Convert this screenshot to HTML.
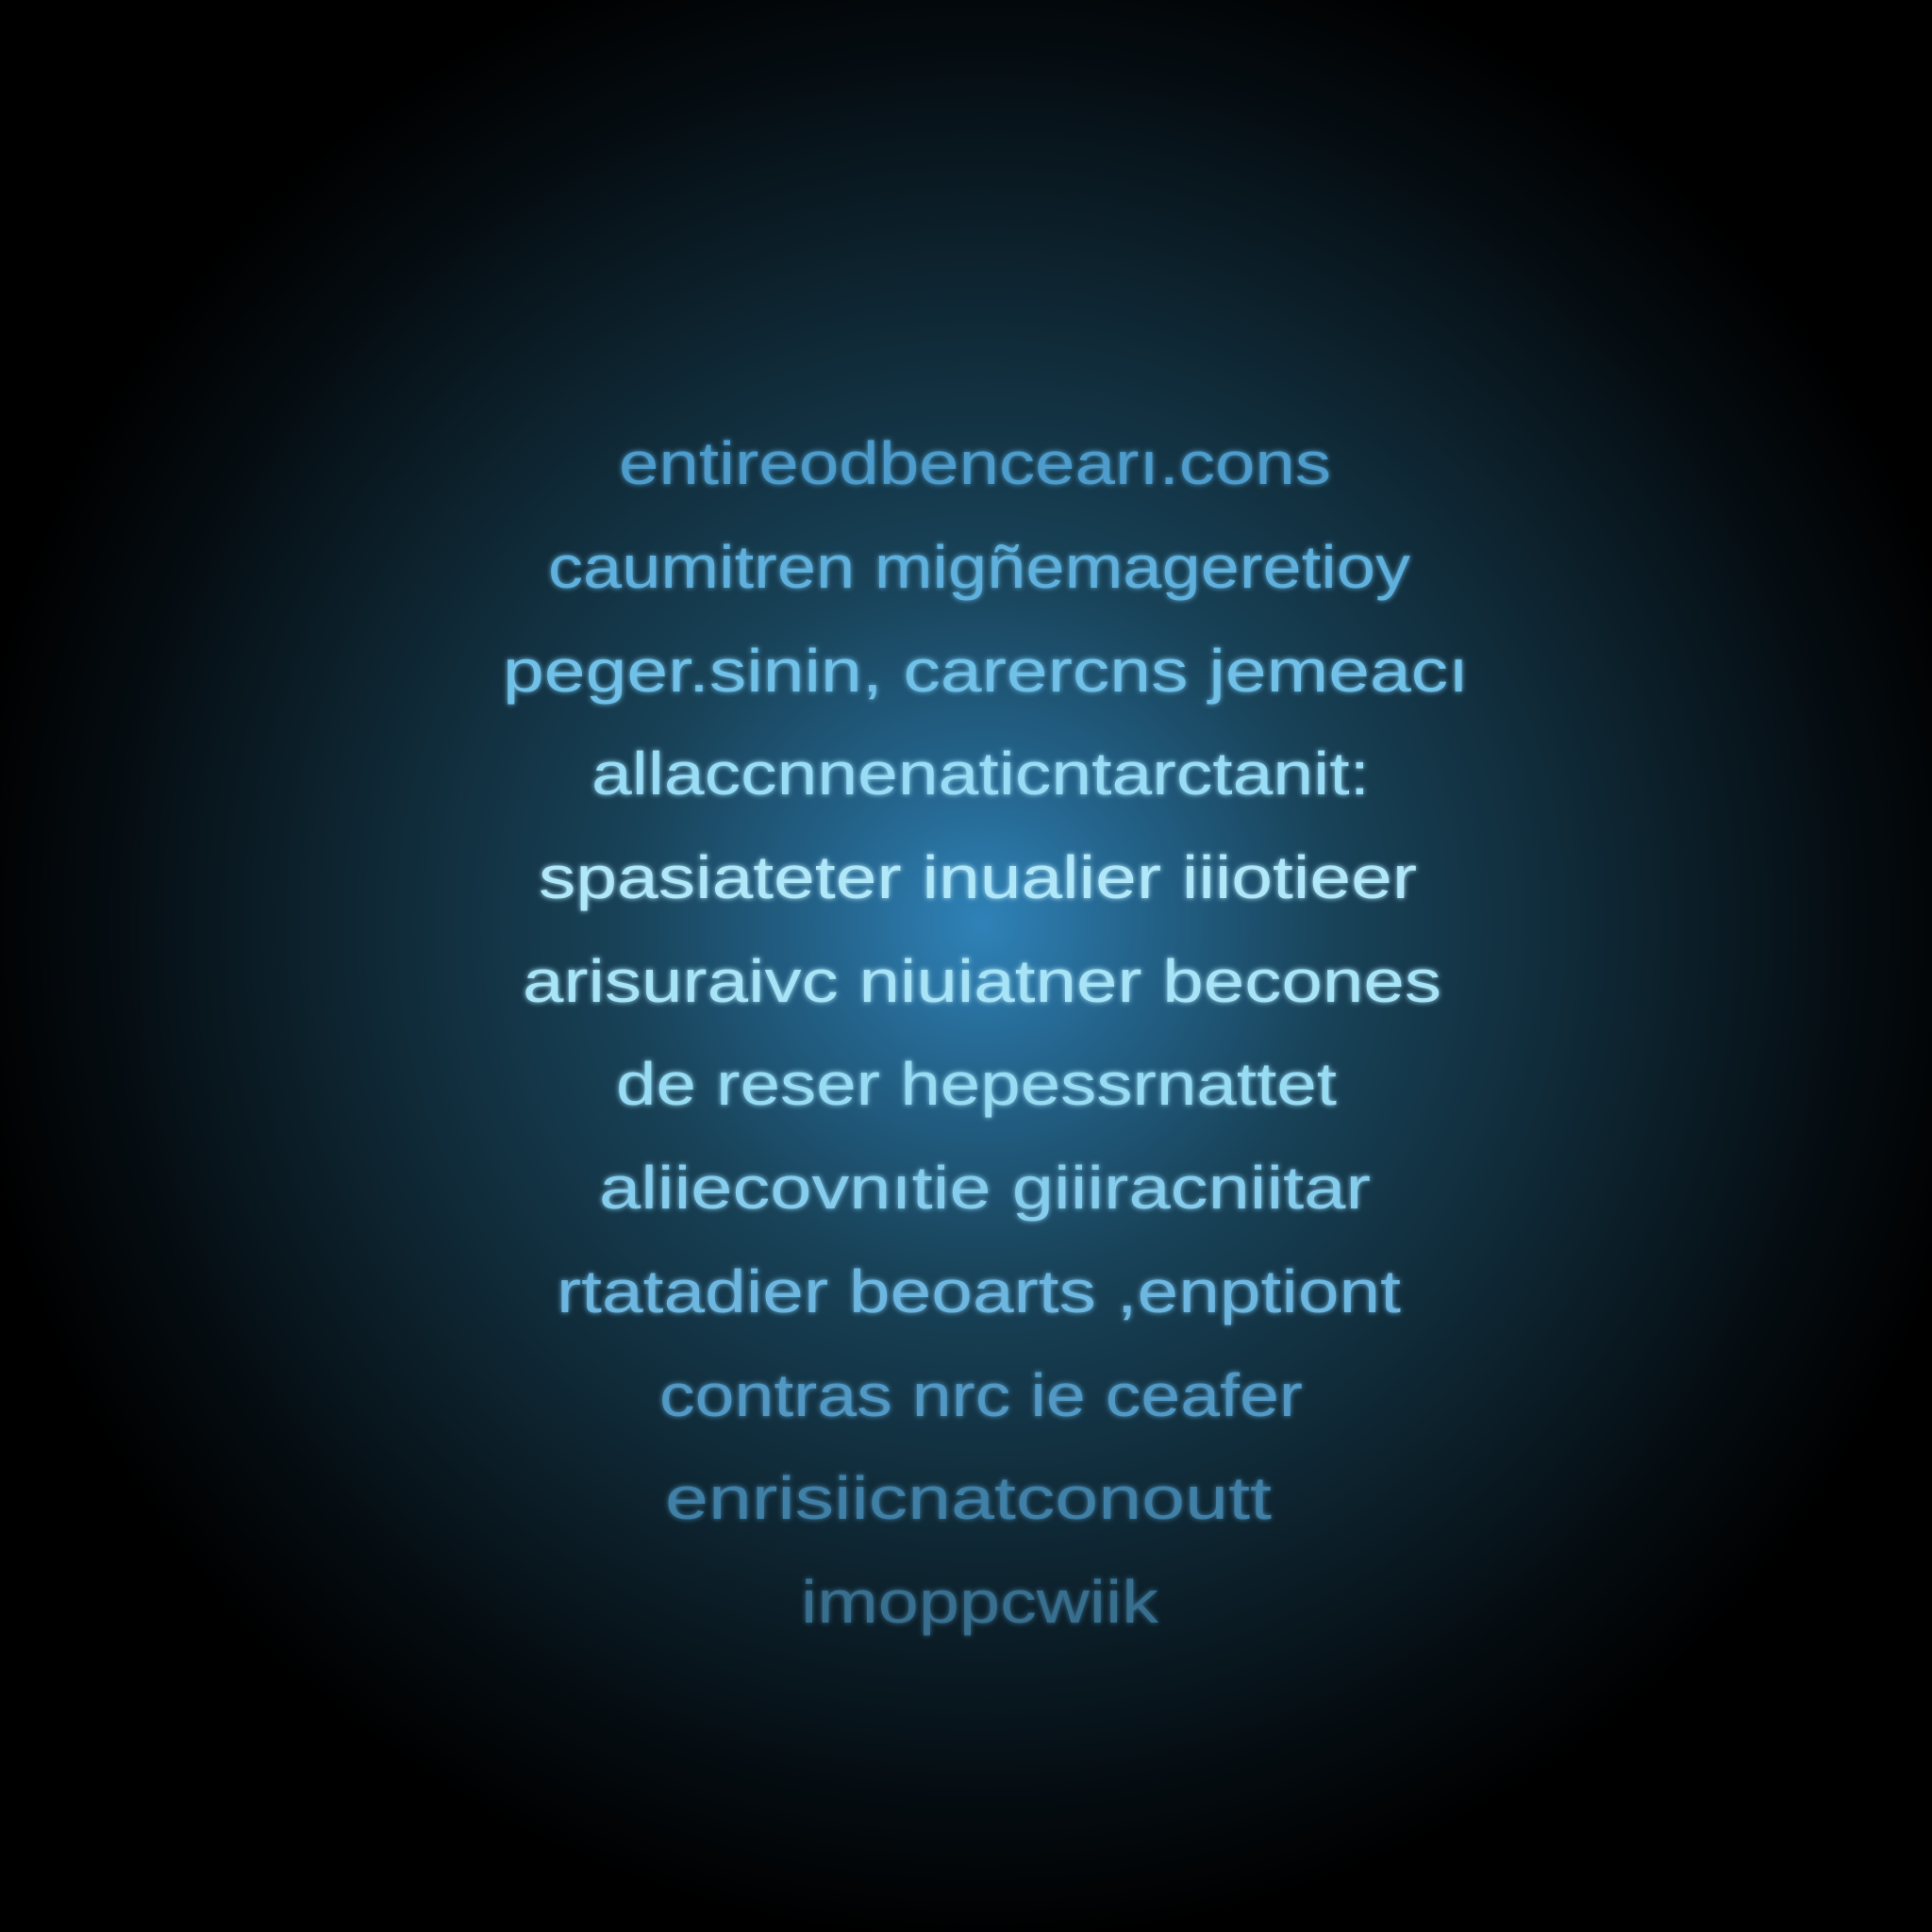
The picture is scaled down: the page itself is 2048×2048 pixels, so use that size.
<!DOCTYPE html>
<html><head><meta charset="utf-8"><style>
html,body{margin:0;padding:0;background:#000;}
body{width:2048px;height:2048px;overflow:hidden;}
svg{display:block;}
text{font-family:"Liberation Sans",sans-serif;font-size:64px;}
</style></head><body>
<svg width="2048" height="2048" viewBox="0 0 2048 2048">
<defs>
<radialGradient id="bg" cx="1040" cy="980" r="1080" gradientUnits="userSpaceOnUse">
<stop offset="0" stop-color="#2f82b8"/>
<stop offset="0.15" stop-color="#24648c"/>
<stop offset="0.35" stop-color="#184258"/>
<stop offset="0.6" stop-color="#0f2835"/>
<stop offset="0.85" stop-color="#050d12"/>
<stop offset="1" stop-color="#000"/>
</radialGradient>
<filter id="glow" x="-10%" y="-50%" width="120%" height="200%">
<feGaussianBlur stdDeviation="3" result="b"/>
<feMerge><feMergeNode in="b"/><feMergeNode in="SourceGraphic"/></feMerge>
</filter>
</defs>
<rect width="2048" height="2048" fill="url(#bg)"/>
<g filter="url(#glow)">
<text x="656" y="513" textLength="755" lengthAdjust="spacingAndGlyphs" fill="#4e9ccb">entireodbencearı.cons</text>
<text x="581" y="623" textLength="914" lengthAdjust="spacingAndGlyphs" fill="#5eb0dc">caumitren migñemageretioy</text>
<text x="533" y="733" textLength="1024" lengthAdjust="spacingAndGlyphs" fill="#6fc0e8">peger.sinin, carercns jemeacı</text>
<text x="627" y="842" textLength="825" lengthAdjust="spacingAndGlyphs" fill="#98dcf6">allaccnnenaticntarctanit:</text>
<text x="571" y="952" textLength="931" lengthAdjust="spacingAndGlyphs" fill="#b0e8fa">spasiateter inualier iiiotieer</text>
<text x="554" y="1062" textLength="974" lengthAdjust="spacingAndGlyphs" fill="#a8e4f8">arisuraivc niuiatner becones</text>
<text x="653" y="1171" textLength="764" lengthAdjust="spacingAndGlyphs" fill="#98dcf4">de reser hepessrnattet</text>
<text x="635" y="1281" textLength="818" lengthAdjust="spacingAndGlyphs" fill="#86ccec">aliiecovnıtie giiiracniitar</text>
<text x="590" y="1391" textLength="895" lengthAdjust="spacingAndGlyphs" fill="#6cb6e0">rtatadier beoarts ,enptiont</text>
<text x="699" y="1501" textLength="682" lengthAdjust="spacingAndGlyphs" fill="#5198c4">contras nrc ie ceafer</text>
<text x="705" y="1610" textLength="643" lengthAdjust="spacingAndGlyphs" fill="#3f7fa6">enrisiicnatconoutt</text>
<text x="849" y="1720" textLength="379" lengthAdjust="spacingAndGlyphs" fill="#386e8e">imoppcwiik</text>
</g>
</svg>
</body></html>
